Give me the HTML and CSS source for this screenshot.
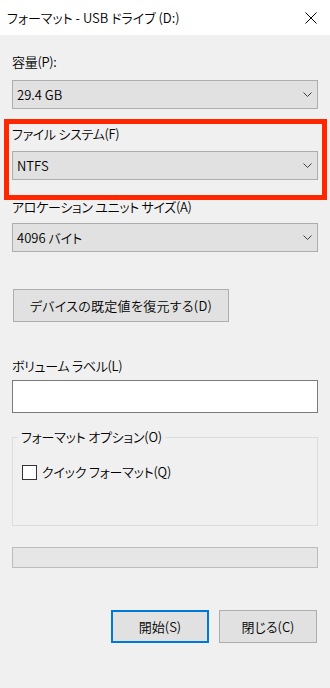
FILE: index.html
```html
<!DOCTYPE html>
<html lang="ja">
<head>
<meta charset="utf-8">
<title>フォーマット - USB ドライブ (D:)</title>
<link rel="stylesheet" href="styles.css">
</head>
<body>
<div class="window">
  <div class="titlebar">
    <span class="title">フォーマット - USB ドライブ (D:)</span>
    <svg class="close" width="12" height="12" viewBox="0 0 12 12"><path d="M0.5 0.5 L11.5 11.5 M11.5 0.5 L0.5 11.5" stroke="#000" stroke-width="1" fill="none"/></svg>
  </div>
  <div class="content">
    <div class="label l1">容量(P):</div>
    <div class="combo c1"><span>29.4 GB</span><svg class="chev" width="9" height="5" viewBox="0 0 9 5"><polyline points="0.5,0.5 4.5,4.5 8.5,0.5" fill="none" stroke="#404040" stroke-width="1"/></svg></div>
    <div class="label l2">ファイル システム(F)</div>
    <div class="combo c2"><span>NTFS</span><svg class="chev" width="9" height="5" viewBox="0 0 9 5"><polyline points="0.5,0.5 4.5,4.5 8.5,0.5" fill="none" stroke="#404040" stroke-width="1"/></svg></div>
    <div class="label l3">アロケーション ユニット サイズ(A)</div>
    <div class="combo c3"><span>4096 バイト</span><svg class="chev" width="9" height="5" viewBox="0 0 9 5"><polyline points="0.5,0.5 4.5,4.5 8.5,0.5" fill="none" stroke="#404040" stroke-width="1"/></svg></div>
    <div class="btn restore">デバイスの既定値を復元する(D)</div>
    <div class="label l4">ボリューム ラベル(L)</div>
    <div class="input"></div>
    <fieldset class="group">
      <legend class="legend">フォーマット オプション(O)</legend>
      <div class="check-row"><span class="checkbox"></span><span class="check-label">クイック フォーマット(Q)</span></div>
    </fieldset>
    <div class="progress"></div>
    <div class="actions">
      <div class="btn action default">開始(S)</div>
      <div class="btn action">閉じる(C)</div>
    </div>
  </div>
  <div class="highlight"></div>
</div>
</body>
</html>
```
FILE: styles.css
```css
html, body {
  margin: 0;
  padding: 0;
}
body {
  width: 330px;
  height: 688px;
  background: #f0f0f0;
  font-family: "Noto Sans CJK JP", "Noto Sans", sans-serif;
  font-feature-settings: "palt";
  font-size: 13px;
  font-weight: 350;
  color: #000;
  overflow: hidden;
}
.window {
  position: relative;
  width: 330px;
  height: 688px;
}
.titlebar {
  height: 35px;
  background: #fff;
  display: flex;
  align-items: center;
  justify-content: space-between;
  padding: 0 13px 0 7px;
}
.title {
  line-height: 20px;
  padding-top: 1px;
}
.content {
  display: flex;
  flex-direction: column;
  padding: 0 12px;
}
.label {
  line-height: 20px;
  height: 20px;
  letter-spacing: -0.3px;
}
.l1 { margin-top: 17px; }
.l2 { margin-top: 15px; }
.l3 { margin-top: 17px; }
.l4 { margin-top: 34px; }
.combo {
  box-sizing: border-box;
  height: 29px;
  background: #e1e1e1;
  border: 1px solid #adadad;
  display: flex;
  align-items: center;
  justify-content: space-between;
  padding: 0 5px 0 4px;
  line-height: 20px;
}
.c1 { margin-top: 8px; }
.c2 { margin-top: 7px; }
.c3 { margin-top: 6px; }
.btn {
  box-sizing: border-box;
  height: 33px;
  background: #e1e1e1;
  border: 1px solid #adadad;
  display: flex;
  align-items: center;
  justify-content: center;
  line-height: 20px;
}
.restore {
  margin-top: 37px;
  margin-left: 1px;
  width: 216px;
  letter-spacing: 0.3px;
}
.input {
  box-sizing: border-box;
  margin-top: 4px;
  height: 33px;
  background: #fff;
  border: 1px solid #7a7a7a;
}
.group {
  margin: 14px 0 0 0;
  padding: 15px 8px 0 0;
  height: 99px;
  box-sizing: border-box;
  border: 1px solid #dcdcdc;
  min-width: 0;
}
.legend {
  padding: 0 3px;
  margin-left: 5px;
  line-height: 20px;
  letter-spacing: -0.2px;
}
.check-row {
  display: flex;
  align-items: center;
  height: 20px;
  line-height: 20px;
  margin-left: 9px;
}
.check-label {
  letter-spacing: -0.2px;
}
.checkbox {
  box-sizing: border-box;
  width: 15px;
  height: 15px;
  background: #fff;
  border: 1px solid #333;
  margin-right: 5px;
}
.progress {
  box-sizing: border-box;
  margin-top: 21px;
  height: 21px;
  background: #e6e6e6;
  border: 1px solid #bcbcbc;
}
.actions {
  margin-top: 42px;
  display: flex;
  justify-content: flex-end;
  gap: 10px;
  padding-right: 1px;
}
.action {
  width: 98px;
}
.default {
  border: 2px solid #0078d7;
}
.highlight {
  position: absolute;
  left: 4px;
  top: 119px;
  width: 323px;
  height: 81px;
  box-sizing: border-box;
  border: 5px solid #ff2600;
}
```
